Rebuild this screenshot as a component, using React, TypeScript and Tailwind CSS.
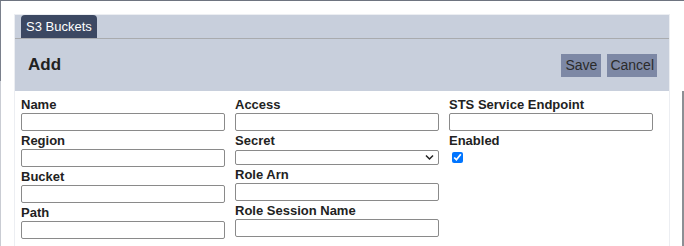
import React from 'react';

const font = { fontFamily: '"Liberation Sans", Arial, sans-serif' };

const Field = ({ label, children }: { label: string; children?: React.ReactNode }) => (
  <div className="flex flex-col">
    <label className="block text-[13px] font-bold leading-[15px] text-[#222]">{label}</label>
    {children ?? <input className="mt-[1px] h-[18px] w-[204px] rounded-[2px] border border-[#8a8a8a] bg-white" />}
  </div>
);

export default function App() {
  return (
    <div className="flex h-[246px] w-[684px] overflow-hidden border-t border-[#6e7480] bg-white" style={font}>
      <div className="flex w-[1px] flex-col">
        <div className="h-[80px] bg-[#7a808c]" />
        <div className="flex-1 bg-[#c9ccd3]" />
      </div>

      <div className="ml-[13px] mt-[13px] flex w-[656px] flex-col self-start border border-[#eceef2]">
        {/* tab strip */}
        <div className="flex h-[24px] items-end border-b border-[#a9abae] bg-[#c8cfdc] pl-[6px]">
          <div className="flex h-[23px] items-center rounded-t-[4px] bg-[#3c4862] px-[5px] text-[13px] text-white">S3 Buckets</div>
        </div>

        {/* header */}
        <div className="flex h-[52px] items-center justify-between bg-[#c8cfdc] pl-[13px] pr-[12px]">
          <h2 className="text-[17px] font-bold text-[#222]">Add</h2>
          <div className="flex gap-[6px]">
            <button className="h-[23px] bg-[#7d88a5] px-[4px] text-[14px] text-[#2b2b2b]">Save</button>
            <button className="h-[23px] bg-[#7d88a5] px-[3px] text-[14px] text-[#2b2b2b]">Cancel</button>
          </div>
        </div>

        {/* form */}
        <div className="flex h-[160px] gap-[10px] bg-white pl-[6px] pt-[6px]">
          <div className="flex flex-col gap-[2px]">
            <Field label="Name" />
            <Field label="Region" />
            <Field label="Bucket" />
            <Field label="Path" />
          </div>
          <div className="flex flex-col gap-[2px]">
            <Field label="Access" />
            <Field label="Secret">
              <div className="relative mt-[2px] h-[15px] w-[204px] rounded-[2px] border border-[#8a8a8a] bg-white">
                <svg className="absolute right-[4px] top-[3px]" width="9" height="7" viewBox="0 0 9 7">
                  <path d="M1 1.5 L4.5 5 L8 1.5" fill="none" stroke="#222" strokeWidth="1.5" />
                </svg>
              </div>
            </Field>
            <Field label="Role Arn" />
            <Field label="Role Session Name" />
          </div>
          <div className="flex flex-col gap-[2px]">
            <Field label="STS Service Endpoint" />
            <Field label="Enabled">
              <input type="checkbox" defaultChecked className="ml-[3px] mt-[4px] h-[11px] w-[11px] accent-[#0075ff]" />
            </Field>
          </div>
        </div>
      </div>

      <div className="ml-[12px] mt-[90px] w-[2px] self-stretch bg-[#8c8f94]" />
    </div>
  );
}
